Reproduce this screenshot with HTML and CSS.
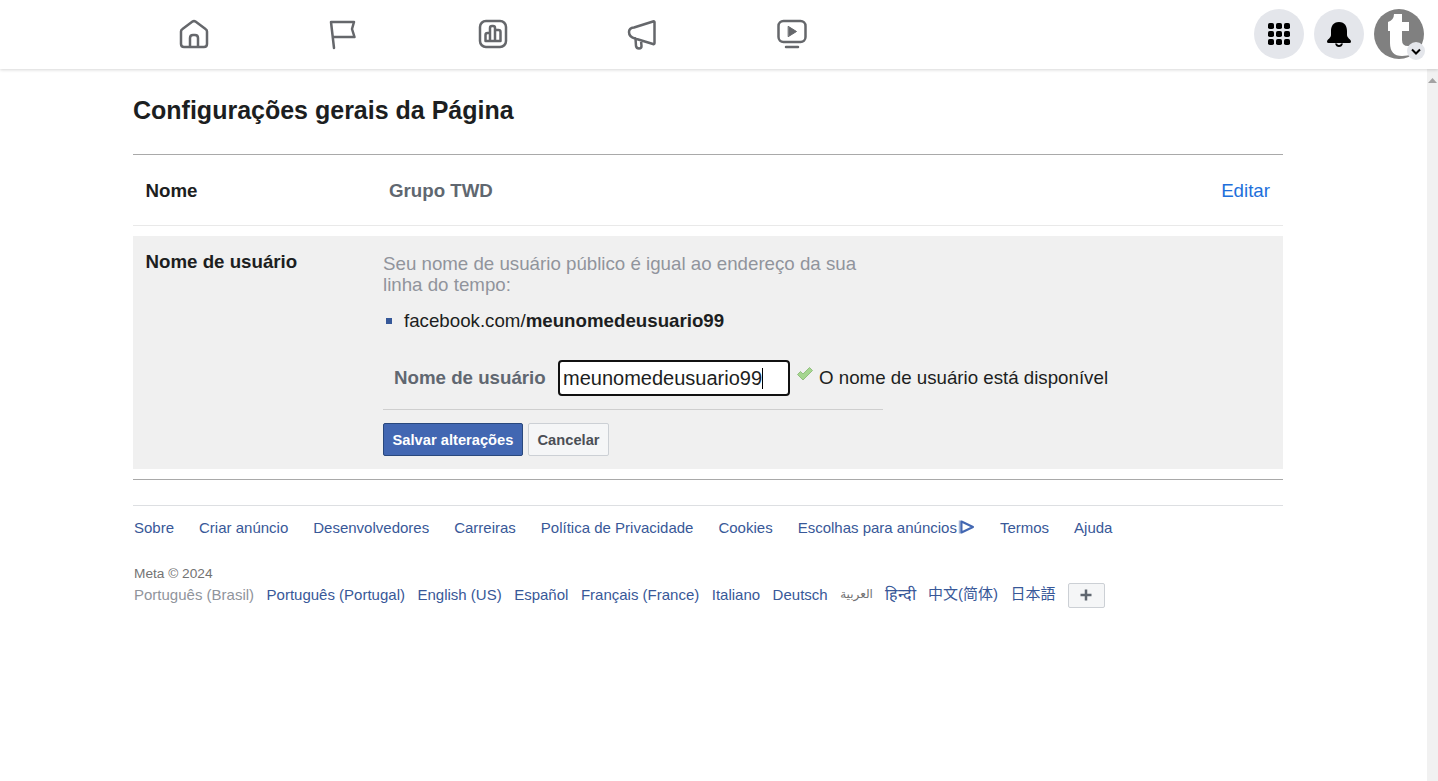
FILE: index.html
```html
<!DOCTYPE html>
<html>
<head>
	<title>Configurações gerais da Página</title>

	<link rel="stylesheet" href="styles.css">
</head>
<body>
	<div id="topbar">
		<div id="tabs">
			<a class="tab">
				<svg width="32" height="32" viewBox="0 0 32 32"><path d="M3 13.500 Q3 12 4.500 11 L14.500 3.600 Q16 2.600 17.500 3.600 L27.500 11 Q29 12 29 13.500 V26 Q29 29 26 29 H6 Q3 29 3 26 Z M12 29 V20 Q12 17 15 17 H17 Q20 17 20 20 V29" /></svg>
			</a>
			<a class="tab">
				<svg width="32" height="32" viewBox="0 0 32 32"><path d="M4 4 H27 L25 11 L27.500 19 H6 M4 4 L7 30" /></svg>
			</a>
			<a class="tab">
				<svg width="32" height="32" viewBox="0 0 32 32"><rect x="3" y="3" width="26" height="26" rx="6" /><path d="M8.500 23 V17 Q8.500 15 10.500 15 H13 V23 Z M13 23 V10 Q13 8 15 8 H16 Q18 8 18 10 V23 M18 23 V12 H21.500 Q23.500 12 23.500 14 V23 Z M8.500 23 H23.500" /></svg>
			</a>
			<a class="tab">
				<svg width="32" height="32" viewBox="0 0 32 32"><path d="M28.500 4 V25 Q28.500 26.500 27 26 L9 20.500 Q3 19 3 14 Q3 10 8 9.500 L27 3.500 Q28.500 3 28.500 4 Z M9.500 20.500 L10 28 Q10.500 30.500 13 30.500 Q15.500 30.500 15.500 28 L15 22.500" /></svg>
			</a>
			<a class="tab">
				<svg width="32" height="32" viewBox="0 0 32 32"><rect x="2.500" y="3" width="27" height="21" rx="5" /><path class="solid" d="M12.500 8.500 L20.500 13.500 L12.500 18.500 Z" /><path d="M10 29 H22" /></svg>
			</a>
		</div>
		<div id="actions">
			<a class="round">
				<svg width="24" height="24" viewBox="0 0 24 24"><g><rect x="1" y="1" width="6" height="6" rx="1.800" /><rect x="9" y="1" width="6" height="6" rx="1.800" /><rect x="17" y="1" width="6" height="6" rx="1.800" /><rect x="1" y="9" width="6" height="6" rx="1.800" /><rect x="9" y="9" width="6" height="6" rx="1.800" /><rect x="17" y="9" width="6" height="6" rx="1.800" /><rect x="1" y="17" width="6" height="6" rx="1.800" /><rect x="9" y="17" width="6" height="6" rx="1.800" /><rect x="17" y="17" width="6" height="6" rx="1.800" /></g></svg>
			</a>
			<a class="round">
				<svg width="26" height="26" viewBox="0 0 26 26"><path d="M13 1 C7 1 5 5.500 5 10 V14 C5 17 1 18.500 1 20.500 Q1 22 2.500 22 H23.500 Q25 22 25 20.500 C25 18.500 21 17 21 14 V10 C21 5.500 19 1 13 1 Z" /><path d="M9 22.500 Q10 26 13 26 Q16 26 17 22.500 H15 Q14.500 24 13 24 Q11.500 24 11 22.500 Z" /></svg>
			</a>
			<a id="avatar">
				<svg width="50" height="50" viewBox="0 0 50 50"><circle cx="25" cy="25" r="25" fill="#808080" /><path fill="#fff" d="M14 13 Q20 11 20 5 H28 V13 H35 V22 H28 V31 Q28 37 34 37 Q37 37 39 35 V45 Q33 47 28 47 Q16 47 16 34 V22 H14 Z" /></svg>
				<span id="caret">
					<svg width="12" height="12" viewBox="0 0 12 12"><path d="M2 4.500 L6 8.500 L10 4.500" /></svg>
				</span>
			</a>
		</div>
	</div>

	<div id="page">
		<div id="content">
			<h1>Configurações gerais da Página</h1>

			<div id="settings">
				<div class="row">
					<div class="label">Nome</div>
					<div class="value">Grupo TWD</div>
					<a class="edit">Editar</a>
				</div>

				<div class="row-open">
					<div class="label">Nome de usuário</div>
					<div class="form">
						<p class="hint">Seu nome de usuário público é igual ao endereço da sua linha do tempo:</p>
						<ul class="address">
							<li>facebook.com/<b>meunomedeusuario99</b></li>
						</ul>
						<div class="field">
							<label>Nome de usuário</label>
							<div class="input">meunomedeusuario99<span class="cursor"></span></div>
							<svg class="check" width="16" height="14" viewBox="0 0 16 14"><path d="M0.500 7.500 L3.500 4.500 L6 7 L12.500 0.500 L15.500 3.500 L6 13 Z" /></svg>
							<span class="ok">O nome de usuário está disponível</span>
						</div>
						<div class="buttons">
							<button class="save">Salvar alterações</button>
							<button class="cancel">Cancelar</button>
						</div>
					</div>
				</div>
			</div>

			<div id="footer">
				<div class="links">
					<a>Sobre</a>
					<a>Criar anúncio</a>
					<a>Desenvolvedores</a>
					<a>Carreiras</a>
					<a>Política de Privacidade</a>
					<a>Cookies</a>
					<a class="choices">Escolhas para anúncios<svg width="17" height="16" viewBox="0 0 17 16"><path class="bar" d="M2 1.500 V14.500" /><path d="M3.500 2.500 L15 8 L3.500 13.500 Z" /></svg></a>
					<a>Termos</a>
					<a>Ajuda</a>
				</div>
				<div class="copy">Meta © 2024</div>
				<div class="langs">
					<span class="current">Português (Brasil)</span>
					<a>Português (Portugal)</a>
					<a>English (US)</a>
					<a>Español</a>
					<a>Français (France)</a>
					<a>Italiano</a>
					<a>Deutsch</a>
					<a class="arabic">العربية</a>
					<a class="hindi">हिन्दी</a>
					<a class="cjk">中文(简体)</a>
					<a class="cjk">日本語</a>
					<button class="more">
						<svg width="12" height="12" viewBox="0 0 12 12"><path d="M6 0.500 V11.500 M0.500 6 H11.500" /></svg>
					</button>
				</div>
			</div>
		</div>
		<div id="scrollbar">
			<svg width="9" height="5" viewBox="0 0 9 5"><path d="M4.500 0 L9 5 H0 Z" /></svg>
		</div>
	</div>
</body>
</html>
```

FILE: styles.css
```css
html, body {
	height: 100%;
	margin: 0;
	padding: 0;
	overflow: hidden;
}

body {
	display: flex;
	flex-direction: column;
	font-family: "Liberation Sans", "Noto Sans CJK SC", sans-serif;
	color: #1c1e21;
	background: white;
}

#topbar {
	position: relative;
	z-index: 2;
	flex: none;
	display: flex;
	justify-content: space-between;
	align-items: center;
	box-sizing: border-box;
	height: 69px;
	padding-bottom: 1px;
	background: white;
	box-shadow: 0px 1px 3px rgba(0, 0, 0, 0.16);
}

#tabs {
	display: flex;
	margin-left: 119px;
}

.tab {
	display: flex;
	justify-content: center;
	width: 149.500px;
}

.tab svg {
	fill: none;
	stroke: #65676b;
	stroke-width: 2.500;
	stroke-linecap: round;
	stroke-linejoin: round;
}

.tab svg .solid {
	fill: #65676b;
	stroke-width: 1;
}

#actions {
	display: flex;
	gap: 10px;
	margin-right: 14px;
}

.round {
	display: flex;
	justify-content: center;
	align-items: center;
	width: 50px;
	height: 50px;
	border-radius: 50%;
	background: #e4e6eb;
}

#avatar {
	position: relative;
	display: block;
	width: 50px;
	height: 50px;
}

#caret {
	position: absolute;
	right: -1px;
	bottom: -1px;
	display: flex;
	justify-content: center;
	align-items: center;
	width: 18px;
	height: 18px;
	border-radius: 50%;
	background: #e4e6eb;
}

#caret svg {
	fill: none;
	stroke: black;
	stroke-width: 2;
}

#page {
	flex: 1;
	display: flex;
	min-height: 0;
}

#content {
	flex: 1;
	padding: 0px 144px 0px 133px;
}

#scrollbar {
	flex: none;
	width: 11px;
	background: #f1f1f1;
	text-align: center;
	line-height: 0;
	padding-top: 9px;
	box-sizing: border-box;
}

#scrollbar svg {
	fill: #a3a3a3;
}

h1 {
	margin: 0px;
	padding-top: 27px;
	height: 58px;
	font-size: 25px;
	line-height: 28px;
	font-weight: bold;
	color: #1c1e21;
}

#settings {
	border-top: 1px solid #a9a9a9;
	border-bottom: 1px solid #a9a9a9;
	padding-bottom: 10px;
}

.row {
	display: flex;
	align-items: center;
	height: 69px;
	padding: 1px 13px 0px 12.500px;
	border-bottom: 1px solid #e9e9e9;
	font-size: 18.720px;
	line-height: 22px;
}

.label {
	width: 243.500px;
	font-size: 18.720px;
	font-weight: bold;
	color: #1c1e21;
}

.value {
	flex: 1;
	font-weight: bold;
	color: #606770;
}

.edit {
	color: #216fdb;
}

.row-open {
	display: flex;
	margin-top: 10px;
	height: 233px;
	box-sizing: border-box;
	padding: 15px 13px 0px 12.500px;
	background: #f0f0f0;
}

.row-open .label {
	width: 237.500px;
	line-height: 21px;
}

.form {
	width: 500px;
	font-size: 18.720px;
}

.hint {
	margin: 3px 0px 0px 0px;
	width: 490px;
	font-size: 18.720px;
	line-height: 20.500px;
	color: #90949c;
}

.address {
	margin: 14.500px 0px 0px 0px;
	padding: 0px 0px 0px 21px;
	list-style: none;
	line-height: 21px;
	position: relative;
}

.address li::before {
	content: "";
	position: absolute;
	left: 3px;
	top: 8px;
	width: 6px;
	height: 6px;
	background: #365899;
}

.field {
	display: flex;
	align-items: center;
	width: 760px;
	height: 36px;
	margin-top: 29.500px;
	padding-left: 11px;
}

.field label {
	width: 164px;
	font-weight: bold;
	color: #606770;
}

.input {
	box-sizing: border-box;
	display: flex;
	align-items: center;
	width: 232px;
	height: 36px;
	padding-left: 3px;
	background: white;
	border: 2px solid #111;
	border-radius: 4px;
	color: #1c1e21;
	font-size: 20px;
}

.cursor {
	display: inline-block;
	width: 1px;
	height: 21px;
	background: black;
}

.check {
	margin: -9px 0px 0px 7px;
	fill: #a5d68f;
	stroke: #84b56f;
	stroke-width: 0.800;
}

.ok {
	margin-left: 6px;
}

.buttons {
	display: flex;
	gap: 5px;
	margin-top: 13px;
	padding-top: 13px;
	border-top: 1px solid #cfcfcf;
}

.buttons button {
	height: 33px;
	box-sizing: border-box;
	border-radius: 2px;
	font-family: "Liberation Sans", sans-serif;
	font-size: 14.700px;
	font-weight: bold;
	padding: 0px;
}

.save {
	width: 140px;
	background: #4267b2;
	border: 1px solid #29487d;
	color: white;
}

.cancel {
	width: 81px;
	background: #f5f6f7;
	border: 1px solid #ccd0d5;
	color: #4b4f56;
}

#footer {
	margin-top: 25px;
	padding-top: 13px;
	border-top: 1px solid #dddfe2;
	color: #385898;
	font-size: 15px;
}

.links {
	display: flex;
	gap: 25px;
	padding-left: 1px;
	line-height: 17px;
}

.choices svg {
	margin: 0px 0px -2px 1px;
	fill: none;
	stroke: #4267b2;
	stroke-width: 2;
	stroke-linejoin: round;
}

.choices svg .bar {
	stroke: #a9b8d8;
	stroke-width: 2.500;
}

.copy {
	margin-top: 30px;
	padding-left: 1px;
	font-size: 13.700px;
	line-height: 15px;
	color: #737373;
}

.langs {
	display: flex;
	align-items: center;
	gap: 12.500px;
	padding-left: 1px;
	margin-top: 1px;
	height: 24px;
}

.current {
	color: #90949c;
}

.arabic {
	font-family: "DejaVu Sans", sans-serif;
	font-size: 12px;
	color: #737373;
}

.hindi {
	font-size: 16px;
	margin-right: -1px;
}

.cjk {
	line-height: 17px;
	margin-top: -2px;
}

.more {
	width: 37px;
	height: 25px;
	margin-top: 2px;
	padding: 0px;
	line-height: 0;
	background: #f5f6f7;
	border: 1px solid #ccd0d5;
	border-radius: 2px;
}

.more svg {
	stroke: #606770;
	stroke-width: 2.500;
}
```
